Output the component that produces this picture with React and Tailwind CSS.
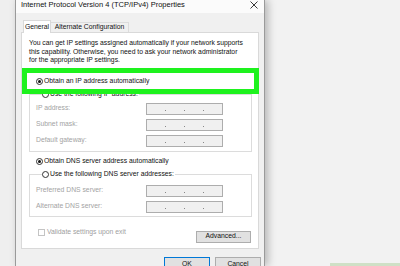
import React from 'react';

const font = { fontFamily: '"Liberation Sans", Arial, sans-serif' };

function Radio({ checked }) {
  return (
    <span className="w-[7px] h-[7px] rounded-full border border-[#333] bg-white flex items-center justify-center shrink-0">
      {checked && <span className="w-[3px] h-[3px] rounded-full bg-[#111]" />}
    </span>
  );
}

function IpField() {
  return (
    <div className="w-[77px] h-[12px] shrink-0 border border-[#adadad] bg-[#f0f0f0] flex items-end justify-evenly pb-[3px]">
      <span className="w-px h-px bg-[#888]" />
      <span className="w-px h-px bg-[#888]" />
      <span className="w-px h-px bg-[#888]" />
    </div>
  );
}

function FieldRow({ label }) {
  return (
    <div className="flex items-center h-[12px] shrink-0">
      <span className="w-[110px] text-[#a3a3a3]">{label}</span>
      <IpField />
    </div>
  );
}

function Group({ legend, children, className }) {
  return (
    <fieldset className={`border border-[#dcdcdc] ml-[7px] mr-[6px] shrink-0 ${className}`}>
      <legend className="ml-[6px] flex items-center gap-[1px] h-[10px] pr-[1px]">
        <Radio />
        <span>{legend}</span>
      </legend>
      {children}
    </fieldset>
  );
}

export default function App() {
  return (
    <div className="w-[400px] h-[266px] overflow-hidden bg-[#f2f2f2] flex text-[6.8px] leading-[8.5px] text-[#111]" style={font}>
      {/* lewat kiri */}
      <div className="w-[15px] shrink-0 bg-[#efefef]" />

      {/* jendela dialog */}
      <div className="w-[250px] shrink-0 border-x border-[#9a9a9a] bg-[#f0f0f0] flex flex-col shadow-[3px_0_8px_rgba(0,0,0,0.25)] relative z-10">
        {/* judul */}
        <div className="h-[13px] shrink-0 bg-[#fbfbfb] flex items-start justify-between pl-[5px] pr-[6px]">
          <span className="leading-[10px] text-[7.5px]">Internet Protocol Version 4 (TCP/IPv4) Properties</span>
          <svg width="8" height="8" viewBox="0 0 8 8" className="mt-[1px]">
            <path d="M0.5 0.5 L7.5 7.5 M7.5 0.5 L0.5 7.5" stroke="#222" strokeWidth="0.9" />
          </svg>
        </div>

        {/* tab */}
        <div className="flex items-end ml-[7px] mt-[7px] relative z-10 h-[13px] shrink-0">
          <div className="h-[13px] w-[28px] bg-white border border-b-0 border-[#d9d9d9] flex items-center justify-center">General</div>
          <div className="h-[10px] w-[78px] border border-b-0 border-l-0 border-[#dcdcdc] flex items-center justify-center mb-px">Alternate Configuration</div>
        </div>

        {/* panel isi */}
        <div className="ml-[5px] w-[238px] h-[217px] shrink-0 -mt-px bg-white border border-[#d9d9d9] flex flex-col relative">
          <p className="pt-[6px] pl-[7px] shrink-0">
            You can get IP settings assigned automatically if your network supports
            <br />this capability. Otherwise, you need to ask your network administrator
            <br />for the appropriate IP settings.
          </p>

          <div className="mt-[12px] ml-[14px] h-[10px] shrink-0 flex items-center gap-[1px]">
            <Radio checked />
            <span>Obtain an IP address automatically</span>
          </div>

          <Group legend="Use the following IP address:" className="mt-[3px] pt-[3px] pb-[4px] pl-[6px] flex flex-col gap-[4px]">
            <FieldRow label="IP address:" />
            <FieldRow label="Subnet mask:" />
            <FieldRow label="Default gateway:" />
          </Group>

          <div className="mt-[5px] ml-[14px] h-[10px] shrink-0 flex items-center gap-[1px]">
            <Radio checked />
            <span>Obtain DNS server address automatically</span>
          </div>

          <Group legend="Use the following DNS server addresses:" className="mt-[3px] pt-[5px] pb-[3px] pl-[6px] flex flex-col gap-[4px]">
            <FieldRow label="Preferred DNS server:" />
            <FieldRow label="Alternate DNS server:" />
          </Group>

          <div className="mt-[14px] shrink-0 flex items-start justify-between pl-[16px] pr-[7px]">
            <div className="flex items-center gap-[2px] h-[6px] mt-[-1px]">
              <span className="w-[7px] h-[7px] border border-[#c4c4c4] bg-white" />
              <span className="text-[#a0a0a0]">Validate settings upon exit</span>
            </div>
            <div className="w-[55px] h-[12px] bg-[#e1e1e1] border border-[#adadad] flex items-center justify-center">Advanced...</div>
          </div>

          {/* sorotan hijau */}
          <div className="absolute left-0 top-[35px] w-[237px] h-[26px] border-[5px] border-[#1ef21e]" />
        </div>

        {/* tombol */}
        <div className="flex justify-end gap-[5px] mt-[8px] pr-[3px] shrink-0">
          <div className="w-[46px] h-[14px] bg-[#e1e1e1] border border-[#0078d7] flex items-center justify-center">OK</div>
          <div className="w-[46px] h-[14px] bg-[#e1e1e1] border border-[#adadad] flex items-center justify-center">Cancel</div>
        </div>
      </div>

      {/* latar kanan */}
      <div className="flex-1 flex flex-col justify-end">
        <div className="ml-auto w-[70px] h-[3px] bg-[#cfe0c6]" />
      </div>
    </div>
  );
}
